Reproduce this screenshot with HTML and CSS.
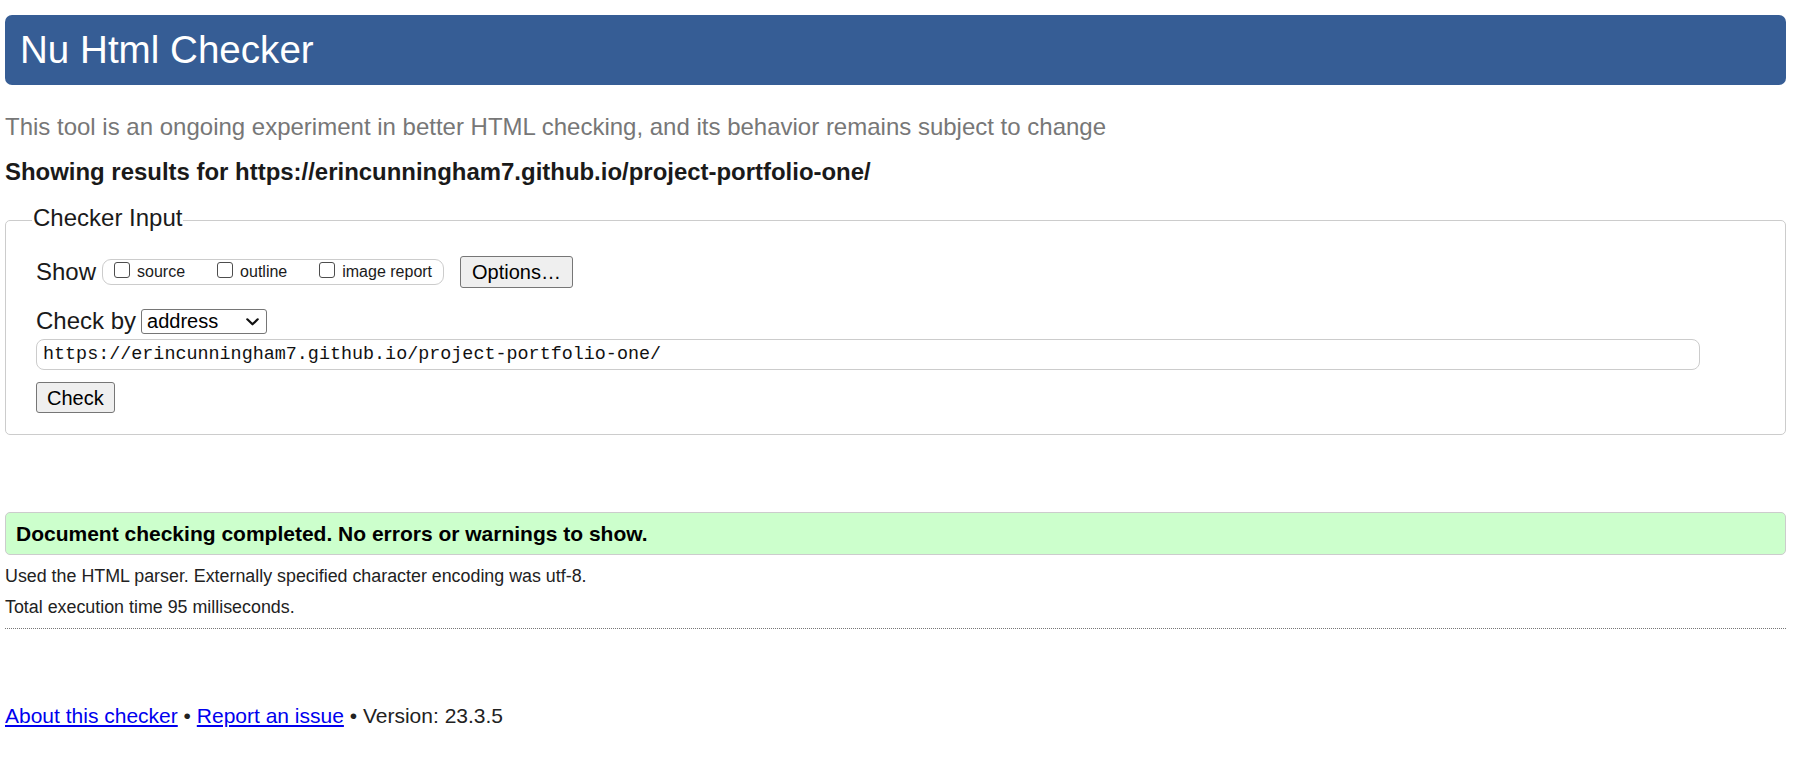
FILE: index.html
```html
<!DOCTYPE html>
<html lang="en">
<head>
<meta charset="utf-8">
<title>Showing results for https://erincunningham7.github.io/project-portfolio-one/ - Nu Html Checker</title>
<link rel="stylesheet" href="styles.css">
</head>
<body>
<h1 class="title">Nu Html Checker</h1>
<p class="intro">This tool is an ongoing experiment in better HTML checking, and its behavior remains subject to change</p>
<p class="showing">Showing results for https://erincunningham7.github.io/project-portfolio-one/</p>
<form class="checker-form">
  <fieldset class="checker">
    <legend class="checker-legend">Checker Input</legend>
    <div class="row row-show">
      <span class="row-label">Show</span>
      <span class="show-group">
        <label class="opt"><input type="checkbox" class="cb"><span class="opt-text">source</span></label>
        <label class="opt"><input type="checkbox" class="cb"><span class="opt-text">outline</span></label>
        <label class="opt"><input type="checkbox" class="cb"><span class="opt-text">image report</span></label>
      </span>
      <button type="button" class="btn btn-options">Options…</button>
    </div>
    <div class="row row-by">
      <span class="row-label">Check by</span>
      <span class="select-wrap">
        <select class="by-select">
          <option>address</option>
          <option>file upload</option>
          <option>text input</option>
        </select>
        <svg class="chevron" width="13" height="8" viewBox="0 0 13 8" aria-hidden="true"><path d="M1.3 1.3 L6.5 6.3 L11.7 1.3" fill="none" stroke="#111111" stroke-width="2.2" stroke-linecap="round" stroke-linejoin="round"/></svg>
      </span>
    </div>
    <div class="row row-url">
      <input class="url" type="url" value="https://erincunningham7.github.io/project-portfolio-one/">
    </div>
    <div class="row row-submit">
      <button type="button" class="btn btn-check">Check</button>
    </div>
  </fieldset>
</form>
<p class="success">Document checking completed. No errors or warnings to show.</p>
<p class="details">Used the HTML parser. Externally specified character encoding was utf-8.</p>
<p class="details details-time">Total execution time 95 milliseconds.</p>
<div class="divider"></div>
<p class="footer"><a href="#about">About this checker</a> • <a href="#issue">Report an issue</a> • Version: 23.3.5</p>
</body>
</html>
```
FILE: styles.css
```css
html, body {
  background: #ffffff;
}
body {
  margin: 0;
  padding: 15px 12px 0 5px;
  font-family: "Liberation Sans", Arial, sans-serif;
  color: #222222;
}
.title {
  margin: 0;
  padding: 13px 15px;
  font-size: 38.6px;
  line-height: 44px;
  font-weight: normal;
  color: #ffffff;
  background: #365d95;
  border-radius: 7px;
}
.intro {
  margin: 28px 0 0;
  font-size: 24px;
  line-height: 28px;
  color: #777777;
}
.showing {
  margin: 17px 0 0;
  font-size: 23.95px;
  line-height: 28px;
  font-weight: bold;
  color: #1a1a1a;
}
.checker-form {
  margin: 18px 0 0;
}
.checker {
  margin: 0;
  padding: 19px 20px 21px 30px;
  border: 1px solid #cccccc;
  border-radius: 5px;
  min-inline-size: 0;
}
.checker-legend {
  margin-left: -4px;
  padding: 0 1px 5px;
  font-size: 24px;
  line-height: 28px;
  color: #1a1a1a;
}
.row {
  display: flex;
  align-items: center;
}
.row-show {
  height: 32px;
}
.row-label {
  font-size: 24px;
  line-height: 28px;
  color: #1a1a1a;
}
.show-group {
  display: flex;
  align-items: center;
  gap: 32px;
  box-sizing: border-box;
  height: 26px;
  margin-left: 6px;
  padding: 0 11px;
  border: 1px solid #cccccc;
  border-radius: 9px;
}
.opt {
  display: flex;
  align-items: center;
}
.cb {
  appearance: none;
  -webkit-appearance: none;
  box-sizing: border-box;
  width: 16px;
  height: 16px;
  margin: 0 0 5px;
  border: 1.5px solid #4d4d4d;
  border-radius: 3px;
  background: #ffffff;
}
.opt-text {
  margin-left: 7px;
  font-size: 16px;
  line-height: 18px;
  color: #1a1a1a;
}
.btn {
  box-sizing: border-box;
  margin: 0;
  font-family: "Liberation Sans", Arial, sans-serif;
  font-size: 20px;
  line-height: 22px;
  color: #000000;
  background: #efefef;
  border: 1px solid #767676;
  border-radius: 3px;
}
.btn-options {
  height: 32px;
  margin-left: 16px;
  padding: 0 11px;
}
.row-by {
  margin-top: 19px;
  height: 28px;
}
.select-wrap {
  position: relative;
  display: flex;
  margin-left: 5px;
}
.by-select {
  appearance: none;
  -webkit-appearance: none;
  box-sizing: border-box;
  width: 126px;
  height: 25px;
  margin: 0;
  padding: 0 0 0 5px;
  font-family: "Liberation Sans", Arial, sans-serif;
  font-size: 20px;
  line-height: 23px;
  color: #000000;
  background: #ffffff;
  border: 1px solid #767676;
  border-radius: 3px;
}
.chevron {
  position: absolute;
  right: 8px;
  top: 9px;
  pointer-events: none;
}
.row-url {
  margin-top: 4px;
}
.url {
  box-sizing: border-box;
  width: 1664px;
  height: 31px;
  margin: 0;
  padding: 0 6px;
  font-family: "Liberation Mono", "Courier New", monospace;
  font-size: 18.4px;
  color: #111111;
  border: 1px solid #cccccc;
  border-radius: 8px;
  background: #ffffff;
}
.row-submit {
  margin-top: 12px;
}
.btn-check {
  height: 31px;
  padding: 0 10px;
}
.success {
  margin: 77px 0 0;
  padding: 8px 10px;
  font-size: 21px;
  line-height: 25px;
  font-weight: bold;
  color: #000000;
  background: #ccffcc;
  border: 1px solid #cccccc;
  border-radius: 5px;
}
.details {
  margin: 11px 0 0;
  font-size: 17.85px;
  line-height: 21px;
  color: #222222;
}
.details-time {
  margin-top: 10px;
}
.divider {
  margin-top: 10px;
  border-top: 1px dotted #777777;
}
.footer {
  margin: 75px 0 0;
  font-size: 21px;
  line-height: 24px;
  color: #222222;
}
.footer a {
  color: #0000ee;
  text-decoration: underline;
}
```
